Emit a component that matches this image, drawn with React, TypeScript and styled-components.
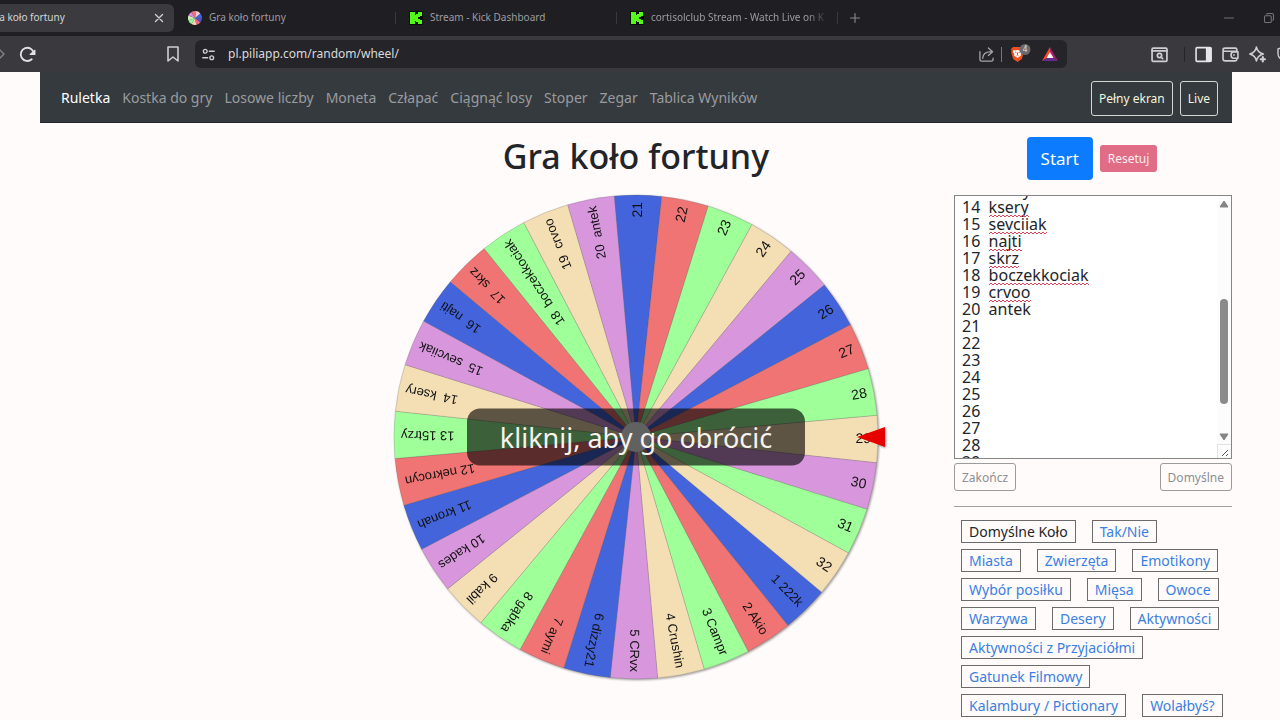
import React, { useEffect, useMemo, useRef, useState } from "react";
import styled, { createGlobalStyle } from "styled-components";

const UI = '"Noto Sans", "Open Sans", sans-serif';

const GlobalStyle = createGlobalStyle`
  * { box-sizing: border-box; }
  body { margin: 0; background: #fffbfb; font-family: ${UI}; color: #212529; }
  button, textarea { font-family: inherit; }
`;

/* ---------- browser window ---------- */

const TabStrip = styled.div`
  display: flex;
  align-items: center;
  height: 36px;
  background: #1f1e23;
  overflow: hidden;
`;

const Tabs = styled.div`
  display: flex;
  flex: 1;
  min-width: 0;
  align-items: center;
  margin-left: -46px;
`;

const Tab = styled.div<{ $active?: boolean }>`
  display: flex;
  align-items: center;
  gap: 7px;
  width: 220px;
  height: 28px;
  padding: 0 8px 0 13px;
  border-radius: 6px;
  background: ${(p) => (p.$active ? "#3b3a3e" : "transparent")};
  color: ${(p) => (p.$active ? "#d4d4d6" : "#9d9ca0")};
  font-size: 10px;
`;

const TabTitle = styled.span<{ $fade?: boolean }>`
  flex: 1;
  padding-bottom: 2px;
  overflow: hidden;
  white-space: nowrap;
  mask-image: ${(p) => (p.$fade ? "linear-gradient(to right, #000 88%, transparent)" : "none")};
`;

const Divider = styled.span<{ $tall?: boolean; $gap?: number; $tone: string }>`
  flex: none;
  width: 1px;
  height: ${(p) => (p.$tall ? 15 : 12)}px;
  margin-left: ${(p) => p.$gap ?? 0}px;
  background: ${(p) => p.$tone};
`;

const IconButton = styled.button<{ $tone?: string; $gap?: number }>`
  display: flex;
  flex: none;
  align-items: center;
  justify-content: center;
  margin-left: ${(p) => p.$gap ?? 0}px;
  padding: 0;
  border: 0;
  background: none;
  color: ${(p) => p.$tone ?? "#cfcfd1"};
`;

const WindowButtons = styled.div`
  display: flex;
  gap: 28px;
  padding-right: 5px;
`;

const Toolbar = styled.div`
  display: flex;
  align-items: center;
  height: 36px;
  background: #3a393d;
  overflow: hidden;
`;

const ToolbarStart = styled.div`
  display: flex;
  align-items: center;
  width: 195px;
  padding: 0 14px 0 0;
  gap: 14px;
`;

const ToolbarEnd = styled.div`
  display: flex;
  flex: none;
  align-items: center;
  justify-content: flex-end;
  width: 225px;
  gap: 10px;
  margin-right: -12px;
`;

const Grow = styled.span`
  flex: 1;
`;

const AddressBar = styled.div`
  display: flex;
  flex: 1;
  align-items: center;
  gap: 7px;
  height: 28px;
  padding: 0 9px 0 7px;
  border-radius: 6px;
  background: #252429;
`;

const Address = styled.input`
  flex: 1;
  min-width: 0;
  padding: 0 0 0 6px;
  border: 0;
  outline: 0;
  background: none;
  color: #dadadc;
  font: 12px/18px ${UI};
`;

const Kick = () => (
  <svg width="14" height="14" viewBox="0 0 14 14">
    <rect width="14" height="14" rx="1" fill="#06100a" />
    <g fill="#53fc18">
      <rect x="1" y="1" width="5" height="12" />
      <rect x="5" y="4" width="4" height="6" />
      <rect x="7" y="3" width="4" height="3" />
      <rect x="9" y="1" width="4" height="4" />
      <rect x="7" y="8" width="4" height="3" />
      <rect x="9" y="9" width="4" height="4" />
    </g>
  </svg>
);

const pie = (a: number, b: number, r: number) => {
  const at = (d: number) =>
    `${(r * Math.cos((d * Math.PI) / 180)).toFixed(2)} ${(r * Math.sin((d * Math.PI) / 180)).toFixed(2)}`;
  return `M0 0L${at(a)}A${r} ${r} 0 0 1 ${at(b)}Z`;
};

const MINI = ["#3f63dc", "#4f55c0", "#e86a8a", "#f0d9b0", "#9cf3a0", "#c8f0b0", "#d98adf", "#ee7474", "#f5c9dc"];

const WheelIcon = () => (
  <svg width="14" height="14" viewBox="-7 -7 14 14">
    {MINI.map((c, i) => (
      <path key={i} d={pie(i * 40 - 40, i * 40, 7)} fill={c} />
    ))}
  </svg>
);

const Line = ({ size, children, w = 1.4, box = 16 }: { size: number; w?: number; box?: number; children: React.ReactNode }) => (
  <svg width={size} height={size} viewBox={`0 0 ${box} ${box}`} fill="none" stroke="currentColor" strokeWidth={w} strokeLinecap="round" strokeLinejoin="round">
    {children}
  </svg>
);

const BraveIcon = () => (
  <svg width="22" height="20" viewBox="0 0 22 20">
    <path d="M4 3h9l2 2-.5 1.500.3 2-2 6.500-4.300 3-4.300-3-2-6.500.3-2L2 5z" fill="#f0501f" />
    <path d="M4.500 6l2 .5L8.500 6l2 .5 2-.5.5 2-1.500 2.500.5 1-3.500 2.500L5 11.500l.5-1L4 8z" fill="#fff" />
    <path d="M6 8l1.500.7M11 8l-1.500.7M8.500 8.500v2.500l-1 .8M8.500 11l1 .8" stroke="#f0501f" fill="none" />
    <circle cx="16" cy="5.500" r="5.500" fill="#68696e" />
    <text x="16" y="8" fontSize="8" textAnchor="middle" fill="#e4e4e6" fontFamily="Noto Sans">4</text>
  </svg>
);

const BatIcon = () => (
  <svg width="16" height="14" viewBox="0 0 16 14">
    <path d="M8 0L0 14l8-5z" fill="#ff4724" />
    <path d="M8 0l8 14-8-5z" fill="#9e1f63" />
    <path d="M0 14h16L8 9z" fill="#662d91" />
    <path d="M8 5l3.500 6h-7z" fill="#fff" />
  </svg>
);

/* ---------- page ---------- */

const Page = styled.div`
  padding: 0 48px 0 40px;
`;

const Nav = styled.nav`
  display: flex;
  align-items: center;
  gap: 12px;
  height: 51px;
  padding: 2px 14px 0 21px;
  border-bottom: 1px solid #23272b;
  background: #353a3f;
`;

const NavLink = styled.a<{ $active?: boolean }>`
  color: ${(p) => (p.$active ? "#fff" : "#999c9f")};
  font-size: 14px;
  line-height: 20px;
  text-decoration: none;
  white-space: nowrap;
`;

const NavActions = styled.div`
  display: flex;
  gap: 7px;
  margin-left: auto;
`;

const NavButton = styled.button`
  height: 35px;
  padding: 0 7px;
  border: 1px solid #d5d8d2;
  border-radius: 3px;
  background: none;
  color: #f3f5dc;
  font-size: 12px;
  white-space: nowrap;
`;

const Columns = styled.main`
  display: grid;
  grid-template-columns: 1fr 2fr 1fr;
  grid-template-rows: 72px auto;
`;

const Title = styled.h1`
  grid-column: 2;
  margin: 0;
  color: #212529;
  font-size: 34px;
  font-weight: 500;
  line-height: 66px;
  text-align: center;
  white-space: nowrap;
`;

const MainActions = styled.div`
  display: flex;
  align-items: center;
  justify-content: center;
  gap: 7px;
  padding: 0 2px 2px 20px;
`;

const StartButton = styled.button`
  height: 43px;
  padding: 0 14px;
  border: 0;
  border-radius: 4px;
  background: #0d7bfd;
  color: #fff;
  font-size: 17px;
`;

const ResetButton = styled.button`
  height: 27px;
  padding: 0 8px;
  border: 0;
  border-radius: 3px;
  background: #e06c86;
  color: #fdeef1;
  font-size: 12px;
`;

const WheelArea = styled.div`
  grid-column: 2;
  display: flex;
  justify-content: center;
  align-items: flex-start;
`;

const WheelBox = styled.div`
  position: relative;
  width: 484px;
  max-width: 100%;
`;

const WheelSvg = styled.svg`
  display: block;
  width: 100%;
  overflow: visible;
  filter: drop-shadow(1px 1px 1px rgba(0, 0, 0, 0.4));
`;

const SpinButton = styled.button`
  position: absolute;
  top: 50%;
  left: 50%;
  transform: translate(-50%, -50%);
  width: 338px;
  height: 57px;
  padding: 0;
  border: 0;
  border-radius: 13px;
  background: rgba(0, 0, 0, 0.62);
  color: #f7f3ec;
  font-size: 27px;
  white-space: nowrap;
`;

const Side = styled.aside`
  padding-left: 20px;
`;

const Editor = styled.div`
  position: relative;
  display: flex;
  height: 264px;
  border: 1px solid #858585;
  background: #fff;
  overflow: hidden;
`;

const ListInput = styled.textarea`
  flex: 1;
  min-width: 0;
  padding: 2px 7px;
  border: 0;
  outline: 0;
  resize: none;
  background: none;
  color: #212529;
  font: 16px/17px ${UI};
  scrollbar-width: none;
`;

const Squiggle = styled.svg`
  position: absolute;
  height: 4px;
  pointer-events: none;
`;

const ScrollBar = styled.div`
  display: flex;
  flex-direction: column;
  align-items: center;
  width: 14px;
  padding-top: 4px;
  background: #fcfcfc;
`;

const Track = styled.div`
  position: relative;
  flex: 1;
  width: 8px;
  margin: 3px 0;
`;

const Thumb = styled.div`
  position: absolute;
  width: 8px;
  border-radius: 4px;
  background: #8b8b8b;
`;

const Grip = styled.svg`
  margin-top: 3px;
`;

const Spread = styled.div`
  display: flex;
  justify-content: space-between;
  margin-top: 4px;
`;

const SmallButton = styled.button`
  height: 28px;
  padding: 0 7px;
  border: 1px solid #9b9b9b;
  border-radius: 3px;
  background: none;
  color: #8d8f91;
  font-size: 12px;
`;

const Rule = styled.hr`
  height: 1px;
  margin: 15px 0 13px;
  border: 0;
  background: #a3a1a1;
`;

const Presets = styled.div`
  display: flex;
  flex-direction: column;
  gap: 6px;
  padding-left: 7px;
`;

const PresetRow = styled.div`
  display: flex;
  gap: 16px;
`;

const Preset = styled.a<{ $current?: boolean }>`
  height: 23px;
  padding: 0 7px;
  border: 1px solid #6b6b6b;
  color: ${(p) => (p.$current ? "#212529" : "#3a80e0")};
  font-size: 14px;
  line-height: 22px;
  text-decoration: none;
  white-space: nowrap;
`;

const NAMES = [
  "1 222k", "2 Akio", "3 Campr", "4 Crushin", "5 CRvx", "6 dizzy21", "7 aymi", "8 gąbka", "9 kabil",
  "10 kades", "11 kronah", "12 nekrocyn", "13 15trzy", "14  ksery", "15  sevciiak", "16  najti",
  "17  skrz", "18  boczekkociak", "19  crvoo", "20  antek", "21", "22", "23", "24", "25", "26", "27",
  "28", "29", "30", "31", "32",
];

const MISSPELT = [13, 14, 15, 16, 17, 18];

const COLORS = ["#4464dc", "#f07473", "#9fff98", "#f4deb4", "#d896dd"];

const sliceColor = (i: number) => COLORS[i < 30 ? i % 5 : (i + 2) % 5];

const STEP = 360 / NAMES.length;

const Wheel = () => (
  <WheelSvg viewBox="-242 -242 484 484">
    {NAMES.map((name, i) => {
      const angle = (i - 28) * STEP + 0.5;
      return (
        <path key={name} d={pie(angle - STEP / 2, angle + STEP / 2, 242)} fill={sliceColor(i)} stroke="#555" strokeOpacity="0.35" strokeWidth="0.6" />
      );
    })}
    {NAMES.map((name, i) => (
      <text key={name} transform={`rotate(${(i - 28) * STEP + 0.5})`} x="235" y="4" textAnchor="end" fontSize={name.length > 2 ? 13 : 14} fill="#111" fontFamily="Liberation Sans, sans-serif" style={{ whiteSpace: "pre" }}>
        {name}
      </text>
    ))}
    <circle r="15" fill="#fff" />
    <path d="M221 0l28-10v20z" fill="#e60000" />
  </WheelSvg>
);

const ROW = 17;

const ListEditor = () => {
  const ref = useRef<HTMLTextAreaElement>(null);
  const [text, setText] = useState(NAMES.join("\n"));
  const [scroll, setScroll] = useState({ top: 0, view: 1, full: 1 });

  const sync = () => {
    const el = ref.current;
    if (el) setScroll({ top: el.scrollTop, view: el.clientHeight, full: el.scrollHeight });
  };

  useEffect(() => {
    if (ref.current) ref.current.scrollTop = 13 * ROW - 1;
    sync();
  }, []);

  const marks = useMemo(() => {
    const ctx = document.createElement("canvas").getContext("2d")!;
    ctx.font = `16px ${UI}`;
    const lines = text.split("\n");
    return MISSPELT.filter((i) => lines[i]?.includes("  ")).map((i) => {
      const [num, word] = lines[i].split("  ");
      return { i, left: ctx.measureText(num + "  ").width, width: ctx.measureText(word).width };
    });
  }, [text]);

  return (
    <Editor>
      <ListInput ref={ref} aria-label="Lista" spellCheck={false} value={text} onChange={(e) => setText(e.target.value)} onScroll={sync} />
      {marks.map((m) => (
        <Squiggle key={m.i} style={{ top: m.i * ROW + 17 - scroll.top, left: 7 + Math.round(m.left), width: Math.round(m.width) }}>
          <path d={"M0 3" + "l2 -2l2 2".repeat(40)} fill="none" stroke="#e2405a" />
        </Squiggle>
      ))}
      <ScrollBar>
        <svg width="10" height="8" viewBox="0 0 10 8"><path d="M5 1l4 6H1z" fill="#858585" stroke="#858585" strokeLinejoin="round" /></svg>
        <Track>
          <Thumb style={{ top: `${(100 * scroll.top) / scroll.full}%`, height: `${(100 * scroll.view) / scroll.full}%` }} />
        </Track>
        <svg width="10" height="8" viewBox="0 0 10 8"><path d="M5 7L1 1h8z" fill="#858585" stroke="#858585" strokeLinejoin="round" /></svg>
        <Grip width="14" height="14" viewBox="0 0 14 14">
          <path d="M.5 14V.5H14" fill="none" stroke="#e2e2e2" />
          <path d="M5 12l6-6M9 12l2-2" stroke="#555" />
        </Grip>
      </ScrollBar>
    </Editor>
  );
};

const NAV = ["Ruletka", "Kostka do gry", "Losowe liczby", "Moneta", "Człapać", "Ciągnąć losy", "Stoper", "Zegar", "Tablica Wyników"];

const PRESETS = [
  ["Domyślne Koło", "Tak/Nie"],
  ["Miasta", "Zwierzęta", "Emotikony"],
  ["Wybór posiłku", "Mięsa", "Owoce"],
  ["Warzywa", "Desery", "Aktywności"],
  ["Aktywności z Przyjaciółmi"],
  ["Gatunek Filmowy"],
  ["Kalambury / Pictionary", "Wolałbyś?"],
];

export default function App() {
  return (
    <>
      <GlobalStyle />
      <TabStrip>
        <Tabs>
          <Tab $active>
            <WheelIcon />
            <TabTitle>Gra koło fortuny</TabTitle>
            <IconButton aria-label="Zamknij kartę">
              <Line size={14} w={1.6}><path d="M4 4l8 8M12 4l-8 8" /></Line>
            </IconButton>
          </Tab>
          <Divider $tone="transparent" />
          <Tab>
            <WheelIcon />
            <TabTitle>Gra koło fortuny</TabTitle>
          </Tab>
          <Divider $tone="#3a393e" />
          <Tab>
            <Kick />
            <TabTitle>Stream - Kick Dashboard</TabTitle>
          </Tab>
          <Divider $tone="#3a393e" />
          <Tab>
            <Kick />
            <TabTitle $fade>cortisolclub Stream - Watch Live on K</TabTitle>
          </Tab>
          <Divider $tone="#3a393e" />
          <IconButton aria-label="Nowa karta" $tone="#88878c" $gap={11}>
            <Line size={12} w={1.5}><path d="M8 2v12M2 8h12" /></Line>
          </IconButton>
        </Tabs>
        <WindowButtons>
          <IconButton aria-label="Minimalizuj" $tone="#75747a">
            <Line size={12} w={1.3}><path d="M2 8h12" /></Line>
          </IconButton>
          <IconButton aria-label="Przywróć" $tone="#75747a">
            <Line size={12} w={1.4}>
              <rect x="2" y="5" width="9" height="9" rx="1.500" />
              <path d="M5 3q.3-1 1.500-1H12q2 0 2 2v5.500q0 1-1 1.500" />
            </Line>
          </IconButton>
        </WindowButtons>
      </TabStrip>
      <Toolbar>
        <ToolbarStart>
          <IconButton aria-label="Dalej" $tone="#808085">
            <svg width="5" height="12" viewBox="0 0 5 12" fill="none" stroke="currentColor" strokeWidth="1.500"><path d="M-1 1l5 5-5 5" /></svg>
          </IconButton>
          <IconButton aria-label="Odśwież" $tone="#e2e2e4">
            <Line size={17} w={1.7}>
              <path d="M12 12.500A6.200 6.200 0 1 1 14 7" />
              <path d="M15 4v4h-4.500z" fill="currentColor" strokeWidth="1" />
            </Line>
          </IconButton>
          <Grow />
          <IconButton aria-label="Zakładka">
            <Line size={16} w={1.6}><path d="M3 1h10v14l-5-4-5 4z" /></Line>
          </IconButton>
        </ToolbarStart>
        <AddressBar>
          <IconButton aria-label="Informacje o stronie">
            <Line size={13} w={1.7}>
              <circle cx="4" cy="4" r="2.300" />
              <path d="M9 4h6M1 12h6" />
              <circle cx="12" cy="12" r="2.300" />
            </Line>
          </IconButton>
          <Address aria-label="Adres" defaultValue="pl.piliapp.com/random/wheel/" />
          <IconButton aria-label="Udostępnij" $tone="#a5a5a8">
            <Line size={15} w={1.4}>
              <path d="M1 5v8q0 2 2 2h10q2 0 2-2v-1" />
              <path d="M4 12q0-7 10-7M10 1l4.500 4L10 9" />
            </Line>
          </IconButton>
          <Divider $tall $tone="#77767b" />
          <IconButton aria-label="Brave Shields"><BraveIcon /></IconButton>
          <IconButton aria-label="Brave Rewards" $gap={4}><BatIcon /></IconButton>
        </AddressBar>
        <ToolbarEnd>
          <IconButton aria-label="Szukaj w kartach">
            <Line size={17} w={1.6}>
              <rect x="1" y="2" width="14" height="12.500" rx="1" />
              <path d="M1 4.500h14" />
              <circle cx="8" cy="9" r="2" />
              <path d="M9.500 10.500l1.500 1.500" />
            </Line>
          </IconButton>
          <Divider $tall $tone="#26252a" $gap={6} />
          <IconButton aria-label="Panel boczny" $tone="#e6e6e8">
            <Line size={17} w={1.5}>
              <rect x="1" y="1.500" width="14" height="13" rx="1" />
              <path d="M11 2h4v12h-4z" fill="currentColor" />
            </Line>
          </IconButton>
          <IconButton aria-label="Portfel">
            <Line size={17} w={1.5}>
              <path d="M14 5V3.500q0-1.500-1.500-1.500H3Q1 2 1 3.500v9Q1 14 3 14h9.500q1.500 0 1.500-1.500V12M1 5h13M15 5.500h-4q-2.500 0-2.500 3t2.500 3h4zM11 8.500h.5" />
            </Line>
          </IconButton>
          <IconButton aria-label="Leo AI">
            <Line size={17} w={1.5}>
              <path d="M7 1q1 5 6.500 6.500Q8 9 7 14 6 9 .8 7.500 6 6 7 1z" />
              <path d="M13 10.500v4M11 12.500h4" strokeWidth="2" />
            </Line>
          </IconButton>
          <IconButton aria-label="VPN">
            <Line size={16}><path d="M8 1l6 2v5q0 4-6 7-6-3-6-7V3z" /></Line>
          </IconButton>
        </ToolbarEnd>
      </Toolbar>
      <Page>
        <Nav>
          {NAV.map((n, i) => (
            <NavLink key={n} href="#" $active={i === 0}>{n}</NavLink>
          ))}
          <NavActions>
            <NavButton>Pełny ekran</NavButton>
            <NavButton>Live</NavButton>
          </NavActions>
        </Nav>
        <Columns>
          <Title>Gra koło fortuny</Title>
          <MainActions>
            <StartButton>Start</StartButton>
            <ResetButton>Resetuj</ResetButton>
          </MainActions>
          <WheelArea>
            <WheelBox>
              <Wheel />
              <SpinButton>kliknij, aby go obrócić</SpinButton>
            </WheelBox>
          </WheelArea>
          <Side>
            <ListEditor />
            <Spread>
              <SmallButton>Zakończ</SmallButton>
              <SmallButton>Domyślne</SmallButton>
            </Spread>
            <Rule />
            <Presets>
              {PRESETS.map((row) => (
                <PresetRow key={row[0]}>
                  {row.map((p) => (
                    <Preset key={p} href="#" $current={p === "Domyślne Koło"}>{p}</Preset>
                  ))}
                </PresetRow>
              ))}
            </Presets>
          </Side>
        </Columns>
      </Page>
    </>
  );
}
